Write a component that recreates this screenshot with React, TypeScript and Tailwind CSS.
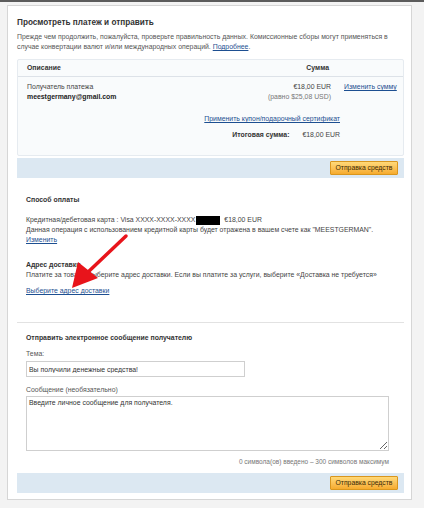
import React from "react";

function SendButton() {
  return (
    <button className="h-[14px] w-[68px] rounded-[1px] border border-[#d9961e] bg-gradient-to-b from-[#ffd978] to-[#f6ab2c] text-[6.8px] leading-none text-[#3b2a05]">
      Отправка средств
    </button>
  );
}

function ActionBar() {
  return (
    <div className="flex h-[20px] items-center justify-end bg-[#dce8f2] pr-[6px]">
      <SendButton />
    </div>
  );
}

function Arrow() {
  return (
    <svg
      className="pointer-events-none absolute left-[66px] top-[230px]"
      width="66"
      height="62"
      viewBox="0 0 66 62"
    >
      <line x1="60" y1="4" x2="20" y2="42" stroke="#e8141b" strokeWidth="3.5" strokeLinecap="round" />
      <polygon points="6,56 12,30 32,46" fill="#e8141b" />
    </svg>
  );
}

export default function App() {
  const link = "text-[#1d4f91] underline";
  return (
    <div className="min-h-[508px] w-[424px] bg-[#f3f3f3] font-['Liberation_Sans',Arial,sans-serif] text-[6.9px] leading-[10px] text-[#444]">
      <div className="h-[2px] bg-[#5c5c5c]" />
      <div className="relative pl-[7px] pt-[3px]">
        <div className="w-[405px] border border-[#d6d6d6] bg-white pb-[6px] pl-[9px] pr-[7px] pt-[11px]">
          <h1 className="text-[8.2px] font-bold leading-[12px] text-[#333]">Просмотреть платеж и отправить</h1>
          <p className="mt-[3px] text-[#555]">
            Прежде чем продолжить, пожалуйста, проверьте правильность данных. Комиссионные сборы могут применяться в
            случае конвертации валют и/или международных операций. <span className={link}>Подробнее</span>.
          </p>

          <div className="mt-[7px] rounded-[2px] border border-[#e6ebf0] bg-[#f9fbfc]">
            <div className="flex h-[17px] items-center border-b border-[#dde2e8] pl-[9px] font-bold text-[#333]">
              <span className="flex-1">Описание</span>
              <span className="mr-[74px]">Сумма</span>
            </div>
            <div className="flex pl-[9px] pt-[5px]">
              <div className="flex-1">
                <div>Получатель платежа</div>
                <div className="font-bold text-[#222]">meestgermany@gmail.com</div>
              </div>
              <div className="text-right">
                <div>€18,00 EUR</div>
                <div className="text-[#777]">(равно $25,08 USD)</div>
              </div>
              <div className="w-[72px] pl-[13px]">
                <span className={link}>Изменить сумму</span>
              </div>
            </div>
            <div className="mt-[12px] pr-[63px] text-right">
              <span className={link}>Применить купон/подарочный сертификат</span>
            </div>
            <div className="mt-[6px] flex justify-end pb-[15px] pr-[63px]">
              <span className="mr-[13px] font-bold text-[#333]">Итоговая сумма:</span>
              <span>€18,00 EUR</span>
            </div>
          </div>

          <div className="mt-[2px]">
            <ActionBar />
          </div>

          <div className="pl-[9px] pt-[17px]">
            <div className="font-bold text-[#333]">Способ оплаты</div>
            <div className="mt-[10px] flex items-center">
              <span>Кредитная/дебетовая карта : Visa XXXX-XXXX-XXXX</span>
              <span className="ml-[1px] inline-block h-[9px] w-[24px] bg-black" />
              <span className="ml-[4px]">€18,00 EUR</span>
            </div>
            <div>Данная операция с использованием кредитной карты будет отражена в вашем счете как "MEESTGERMAN".</div>
            <div className={link}>Изменить</div>

            <div className="mt-[15px] font-bold text-[#333]">Адрес доставки</div>
            <div>Платите за товар? Выберите адрес доставки. Если вы платите за услуги, выберите «Доставка не требуется»</div>
            <div className={`mt-[6px] ${link}`}>Выберите адрес доставки</div>
          </div>

          <div className="mt-[26px] border-t border-[#e2e2e2]" />

          <div className="pl-[9px] pt-[10px]">
            <div className="font-bold text-[#333]">Отправить электронное сообщение получателю</div>
            <div className="mt-[6px] text-[#555]">Тема:</div>
            <input
              readOnly
              value="Вы получили денежные средства!"
              className="mt-[2px] h-[16px] w-[219px] border border-[#cfcfcf] px-[2px] text-[6.9px] text-[#333] outline-none"
            />
            <div className="mt-[8px] text-[#555]">Сообщение (необязательно)</div>
            <textarea
              readOnly
              value="Введите личное сообщение для получателя."
              className="mt-[1px] block h-[55px] w-[363px] resize border border-[#cfcfcf] px-[2px] py-[1px] text-[6.9px] leading-[10px] text-[#333] outline-none"
            />
            <div className="mt-[6px] w-[363px] text-right text-[6.5px] text-[#777]">
              0 символа(ов) введено – 300 символов максимум
            </div>
          </div>

          <div className="mt-[6px]">
            <ActionBar />
          </div>
        </div>
        <Arrow />
      </div>
    </div>
  );
}
